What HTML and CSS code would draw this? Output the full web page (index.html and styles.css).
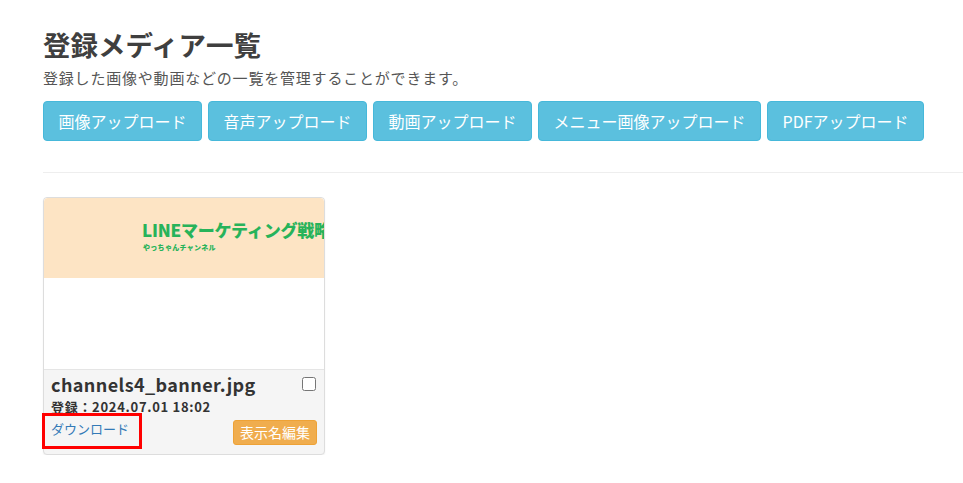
FILE: index.html
```html
<!DOCTYPE html>
<html lang="ja">
<head>
<meta charset="utf-8">
<link rel="stylesheet" href="styles.css">
</head>
<body>
<main class="page">
  <h1 class="title">登録メディア一覧</h1>
  <p class="lead">登録した画像や動画などの一覧を管理することができます。</p>
  <div class="actions">
    <button class="btn btn-info">画像アップロード</button>
    <button class="btn btn-info">音声アップロード</button>
    <button class="btn btn-info">動画アップロード</button>
    <button class="btn btn-info">メニュー画像アップロード</button>
    <button class="btn btn-info">PDFアップロード</button>
  </div>
  <hr class="divider">
  <div class="grid">
    <div class="card">
      <div class="thumb">
        <div class="banner">
          <div class="banner-title">LINEマーケティング戦略</div>
          <div class="banner-sub">やっちゃんチャンネル</div>
        </div>
      </div>
      <div class="card-foot">
        <div class="name-row">
          <span class="fname">channels4_banner.jpg</span>
          <input type="checkbox" class="check">
        </div>
        <div class="date">登録：2024.07.01 18:02</div>
        <div class="foot-row">
          <a class="dl" href="#">ダウンロード</a>
          <button class="btn-edit">表示名編集</button>
        </div>
      </div>
    </div>
  </div>
</main>
</body>
</html>
```
FILE: styles.css
```css
* { box-sizing: border-box; }
body {
  margin: 0;
  background: #fff;
  font-family: "Noto Sans CJK JP", "Noto Sans", sans-serif;
  color: #444;
}
.page {
  padding: 25px 0 0 43px;
}
.title {
  margin: 0;
  font-size: 27.5px;
  line-height: 38px;
  font-weight: 700;
  color: #3f3f3f;
}
.lead {
  margin: 5px 0 0;
  font-size: 15px;
  line-height: 20px;
  letter-spacing: 0.8px;
  color: #555;
}
.actions {
  display: flex;
  gap: 6px;
  margin-top: 13px;
}
.btn {
  font-family: inherit;
  font-size: 16px;
  line-height: 20px;
  height: 40px;
  padding: 9px 14.5px 11px;
  border-radius: 4px;
  border: 1px solid #46b8da;
  cursor: pointer;
}
.btn-info {
  background: #5bc0de;
  color: #fff;
}
.divider {
  border: 0;
  border-top: 1px solid #eee;
  margin: 31px 0 0;
}
.grid {
  display: flex;
  margin-top: 24px;
}
.card {
  width: 282px;
  border: 1px solid #ddd;
  border-radius: 4px;
  background: #f5f5f5;
  box-shadow: 0 1px 2px rgba(0,0,0,0.06);
  position: relative;
}
.thumb {
  height: 172px;
  background: #fff;
  border-bottom: 1px solid #e5e5e5;
  border-radius: 4px 4px 0 0;
  overflow: hidden;
}
.banner {
  height: 80px;
  background: #fde4c4;
  padding: 22px 0 0 98px;
  white-space: nowrap;
  overflow: hidden;
}
.banner-title {
  font-size: 17px;
  line-height: 20px;
  font-weight: 900;
  color: #27b35a;
  letter-spacing: -0.2px;
}
.banner-sub {
  font-size: 7px;
  line-height: 10px;
  font-weight: 900;
  color: #27b35a;
  margin-top: 2px;
  padding-left: 1px;
  letter-spacing: 0.3px;
}
.card-foot {
  padding: 2px 7px 9px 7px;
  position: relative;
}
.name-row {
  display: flex;
  align-items: center;
  justify-content: space-between;
  height: 24px;
}
.fname {
  font-size: 18px;
  font-weight: 700;
  color: #333;
  letter-spacing: 0.4px;
}
.check {
  width: 14px;
  height: 14px;
  margin: 0 1px 0 0;
}
.date {
  font-size: 13px;
  line-height: 18px;
  font-weight: 700;
  color: #333;
  letter-spacing: 0.7px;
  margin-top: 2px;
}
.foot-row {
  display: flex;
  justify-content: space-between;
  align-items: flex-end;
  margin-top: 4px;
}
.dl {
  position: relative;
  font-size: 13px;
  line-height: 18px;
  color: #337ab7;
  text-decoration: none;
  margin-bottom: 7px;
}
.dl::after {
  content: "";
  position: absolute;
  left: -9px;
  right: -13px;
  top: -7px;
  bottom: -11px;
  border: 3px solid #f00;
}
.btn-edit {
  font-family: inherit;
  font-size: 14px;
  line-height: 19px;
  height: 25px;
  padding: 2px 6px;
  background: #f0ad4e;
  color: #fff;
  border: 1px solid #eea236;
  border-radius: 3px;
}
```
